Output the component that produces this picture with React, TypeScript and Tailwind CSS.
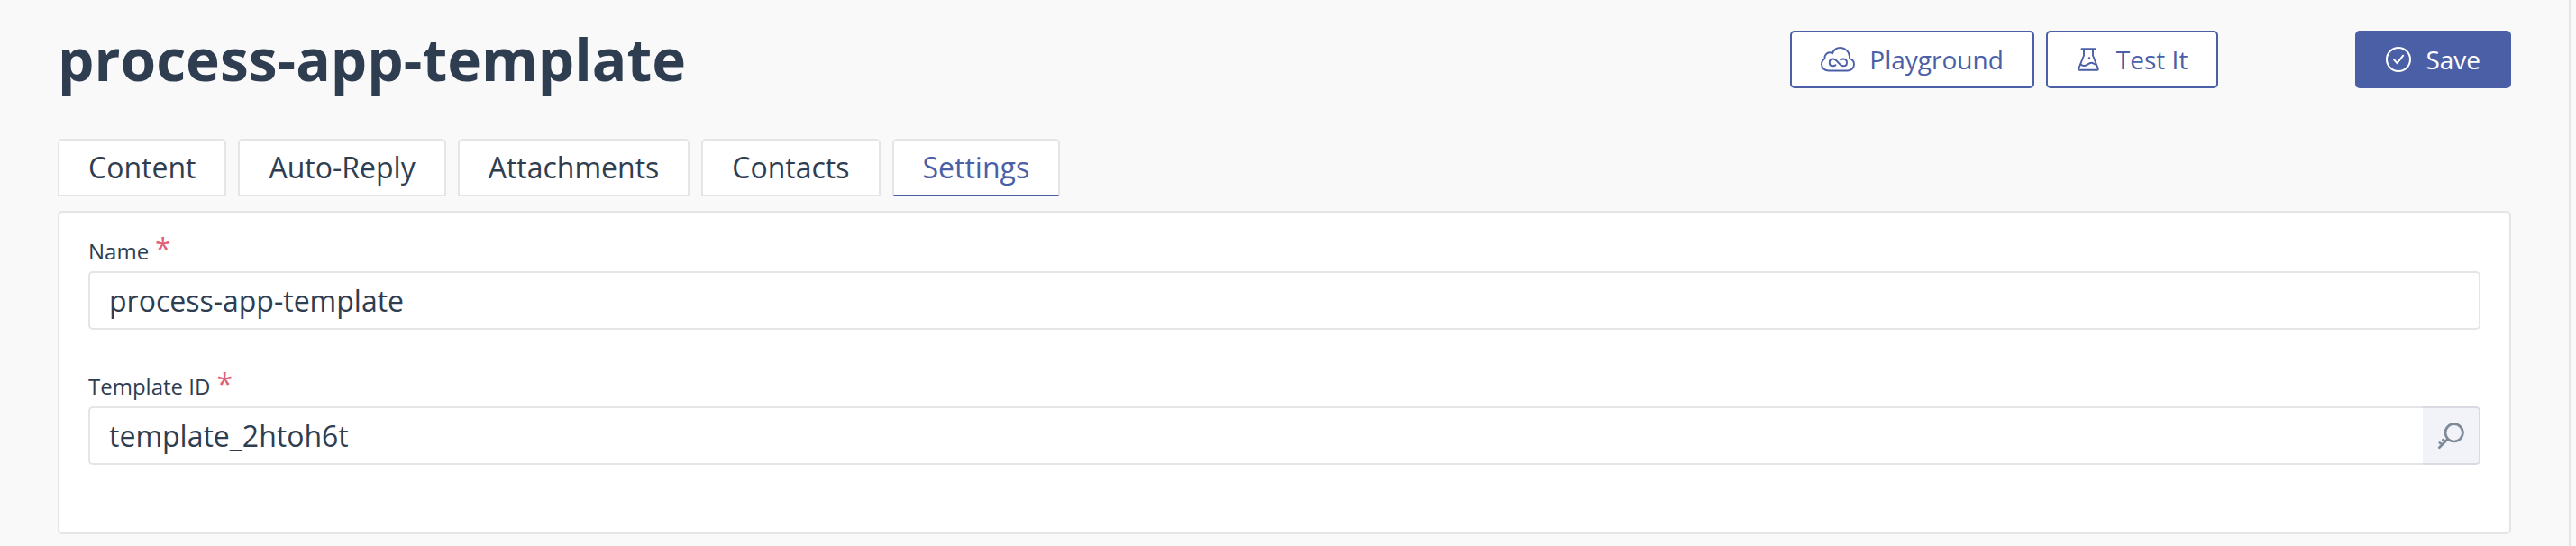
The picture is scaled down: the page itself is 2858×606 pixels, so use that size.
import React, { useState } from "react";

const tabs = ["Content", "Auto-Reply", "Attachments", "Contacts", "Settings"];

function CloudIcon() {
  return (
    <svg aria-hidden="true" width="38" height="28" viewBox="0 0 38 28" fill="none" stroke="currentColor" strokeWidth="1.9" strokeLinecap="round" strokeLinejoin="round">
      <path d="M9 26.5C4.400 26.500 1 23.500 1 19.300C1 16.500 2.500 14.400 4.500 13.200C3.900 9.300 6.800 6.300 10 6.300C11.200 6.300 12.200 6.700 13 7.400C14.300 3.600 17.700 1 21.700 1C27.200 1 31.800 5.400 32 10.800C32.100 11.600 32.100 12.500 32 13.200C35 14 37 16.500 37 19.500C37 23.500 33.700 26.500 29.500 26.500Z" />
      <path d="M16.500 20.300C15.700 21 14.700 21.300 13.700 21.300C11.400 21.300 9.800 19.600 9.800 17.400C9.800 15.200 11.400 13.500 13.700 13.500C16 13.500 17.500 15 19.400 17.400C21.300 19.800 22.800 21.300 25.100 21.300C27.400 21.300 29 19.600 29 17.400C29 15.200 27.400 13.500 25.100 13.500C24.100 13.500 23.100 13.800 22.300 14.500" />
    </svg>
  );
}

function FlaskIcon() {
  return (
    <svg aria-hidden="true" width="26" height="28" viewBox="-1 0 26 28" fill="none" stroke="currentColor" strokeWidth="1.9" strokeLinecap="round" strokeLinejoin="round">
      <path d="M4.500 2.200H19.500M7 2.200V9.500L1.200 24.300Q1 25.800 2.300 25.800H21.700Q23 25.800 22.800 24.300L17 9.500V2.200" />
      <path d="M3.600 19.500C6 21.800 8.500 21.300 11 19.600C13.500 17.900 15.500 16.800 17.500 18.400L19.800 19.600" />
      <circle cx="13" cy="12.500" r="1.200" fill="currentColor" stroke="none" />
    </svg>
  );
}

function CheckCircleIcon() {
  return (
    <svg aria-hidden="true" width="28" height="28" viewBox="0 0 28 28" fill="none" stroke="currentColor" strokeWidth="2" strokeLinecap="round" strokeLinejoin="round">
      <circle cx="14" cy="14" r="13" />
      <path d="M9 14.200L12.500 18.200L19.200 9.700" />
    </svg>
  );
}

function KeyIcon() {
  return (
    <svg aria-hidden="true" width="30" height="30" viewBox="0 0 30 30" fill="none" stroke="currentColor" strokeWidth="2.700" strokeLinecap="round" strokeLinejoin="round">
      <circle cx="18.700" cy="11.300" r="9.700" />
      <path d="M11.700 18.300L2.300 27.700M2.800 22.500L5.500 24.500M6.300 19.200L9 21.200" />
    </svg>
  );
}

function Label({ htmlFor, children }: { htmlFor: string; children: React.ReactNode }) {
  return (
    <label htmlFor={htmlFor} className="flex h-9 items-baseline gap-[7px] text-2xl">
      {children}
      <span className="text-[32px] leading-[30px] text-[#e0607a]">*</span>
    </label>
  );
}

const outline =
  "flex h-16 items-center rounded-[5px] border-2 border-[#4b5fa7] bg-white px-8 text-[28px] text-[#4b5fa7]";

export default function App() {
  const [active, setActive] = useState("Settings");
  const [name, setName] = useState("process-app-template");
  const [id, setId] = useState("template_2htoh6t");

  return (
    <div className="flex min-h-screen bg-[#f9f9f9] font-['Open_Sans',sans-serif] text-[#2f3d50]">
      <main className="flex-1 border-r-2 border-[#e5e5e5] pt-[34px] pr-16 pl-16">
        <header className="flex h-16 items-center justify-between">
          <h1 className="text-[64px] leading-16 font-bold">process-app-template</h1>
          <div className="flex">
            <button type="button" className={`${outline} mr-[13px] gap-4`}>
              <CloudIcon />
              Playground
            </button>
            <button type="button" className={`${outline} gap-[18px]`}>
              <FlaskIcon />
              Test It
            </button>
            <button type="button" className="ml-38 flex h-16 items-center gap-4 rounded-[5px] bg-[#4b5fa7] px-[34px] text-[28px] text-white">
              <CheckCircleIcon />
              Save
            </button>
          </div>
        </header>

        <nav role="tablist" className="mt-14 flex gap-[13px]">
          {tabs.map((tab) => (
            <button
              key={tab}
              type="button"
              role="tab"
              aria-selected={tab === active}
              onClick={() => setActive(tab)}
              className={`h-16 rounded-t-[5px] border-2 bg-white px-8 text-[32px] leading-[60px] ${
                tab === active ? "border-[#e5e5e5] border-b-[#4b5fa7] text-[#4b5fa7]" : "border-[#e5e5e5]"
              }`}
            >
              {tab}
            </button>
          ))}
        </nav>

        <section className="mt-4 rounded-[5px] border-2 border-[#e5e5e5] bg-white px-8 pt-[25px] pb-[75px]">
          <Label htmlFor="name">Name</Label>
          <input
            id="name"
            required
            value={name}
            onChange={(e) => setName(e.target.value)}
            className="mt-1 block h-[65px] w-full rounded-[5px] border-2 border-[#e5e5e5] px-[21px] text-[32px] outline-none"
          />
          <div className="mt-[45px]">
            <Label htmlFor="template-id">Template ID</Label>
            <div className="mt-1 flex h-[65px]">
              <input
                id="template-id"
                required
                value={id}
                onChange={(e) => setId(e.target.value)}
                className="min-w-0 flex-1 rounded-l-[5px] border-2 border-r-0 border-[#e5e5e5] px-[21px] text-[32px] outline-none"
              />
              <button
                type="button"
                aria-label="Edit template ID"
                className="flex w-16 items-center justify-center rounded-r-[5px] border-2 border-l-0 border-[#dadbe2] bg-[#f2f3f9] text-[#7f8a97]"
              >
                <KeyIcon />
              </button>
            </div>
          </div>
        </section>
      </main>
      <div className="w-1.5" />
    </div>
  );
}
